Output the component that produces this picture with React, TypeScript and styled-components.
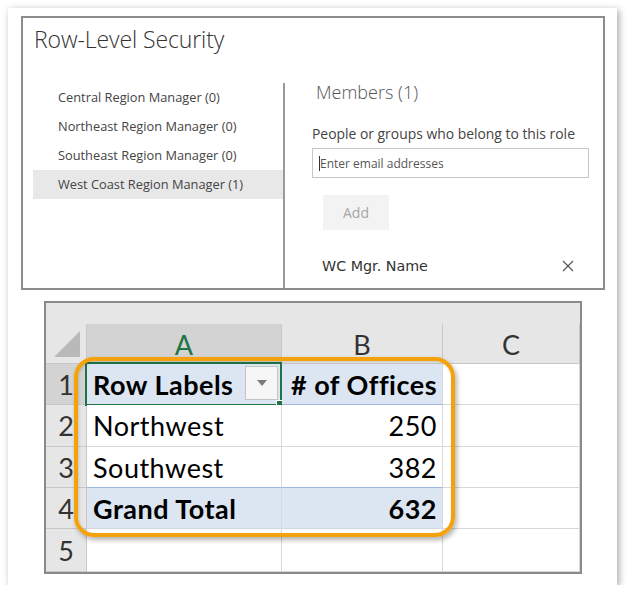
import styled, { createGlobalStyle } from "styled-components"

const Global = createGlobalStyle`
    body {
        margin: 0;
        background: #ffffff;
        font-family: "Open Sans", "Liberation Sans", sans-serif;
    }
`

const Card = styled.div`
    margin: 8px 0 0 8px;
    width: 609px;
    height: 577px;
    box-sizing: border-box;
    background: #ffffff;
    box-shadow: 2px 2px 7px rgba(0, 0, 0, 0.35);
    padding: 8px 0 0 13px;
    display: flex;
    flex-direction: column;
    align-items: flex-start;
    gap: 11px;
`

const RlsPanel = styled.section`
    width: 584px;
    height: 274px;
    box-sizing: border-box;
    border: 2px solid #8c8c8c;
    display: flex;
    flex-direction: column;
`

const Title = styled.h1`
    margin: 0;
    padding: 5px 0 0 11px;
    height: 56px;
    box-sizing: border-box;
    font-weight: 300;
    font-size: 23px;
    color: #333333;
    letter-spacing: -0.1px;
`

const PanelBody = styled.div`
    flex: 1;
    display: flex;
    padding-top: 9px;
`

const RoleList = styled.ul`
    list-style: none;
    margin: 0;
    padding: 0 0 0 10px;
    width: 260px;
    border-right: 2px solid #9a9a9a;
`

const RoleItem = styled.li<{ $active?: boolean }>`
    height: 29px;
    line-height: 29px;
    padding-left: 25px;
    font-size: 12.8px;
    color: #444444;
    background: ${p => (p.$active ? "#e8e8e8" : "transparent")};
`

const MembersPane = styled.div`
    flex: 1;
    padding: 0 14px 0 27px;
    display: flex;
    flex-direction: column;
    align-items: flex-start;
`

const MembersHeading = styled.h2`
    margin: -2px 0 0 4px;
    font-weight: 300;
    font-size: 18px;
    color: #555555;
    line-height: 22px;
`

const FieldLabel = styled.label`
    margin-top: 22px;
    font-size: 13.9px;
    color: #444444;
    line-height: 18px;
`

const EmailBox = styled.div`
    margin-top: 5px;
    width: 277px;
    height: 30px;
    box-sizing: border-box;
    border: 1px solid #c6c6c6;
    display: flex;
    align-items: center;
    padding-left: 6px;
    font-size: 12px;
    color: #555555;
`

const Caret = styled.span`
    width: 1px;
    height: 15px;
    background: #333333;
`

const AddButton = styled.button`
    margin: 17px 0 0 11px;
    width: 66px;
    height: 35px;
    border: none;
    background: #f3f3f3;
    color: #a6a6a6;
    font-family: inherit;
    font-size: 14px;
`

const MemberRow = styled.div`
    margin: 28px 0 0 10px;
    width: 252px;
    display: flex;
    justify-content: space-between;
    align-items: center;
    font-family: "DejaVu Sans", "Open Sans", sans-serif;
    font-size: 14.3px;
    color: #333333;
`

const SheetWrap = styled.div`
    position: relative;
    margin-left: 23px;
`

const Sheet = styled.div`
    width: 538px;
    height: 273px;
    box-sizing: border-box;
    border: 2px solid #8a8a8a;
    background: #ffffff;
    display: grid;
    grid-template-columns: 41px 195px 161px 1fr;
    grid-template-rows: 21px 40px 41px 42px 41px 41px 1fr;
    font-family: "Lato", "Open Sans", sans-serif;
    overflow: hidden;
`

const TopStrip = styled.div`
    grid-column: 1 / -1;
    background: #e6e6e6;
`

const Corner = styled.div`
    background: #e6e6e6;
    border-right: 1px solid #c8c8c8;
    border-bottom: 1px solid #c8c8c8;
    display: flex;
    align-items: flex-end;
    justify-content: flex-end;
    padding: 0 6px 6px 0;
`

const ColHead = styled.div<{ $selected?: boolean }>`
    background: ${p => (p.$selected ? "#d3d3d3" : "#e6e6e6")};
    color: ${p => (p.$selected ? "#217346" : "#333333")};
    border-right: 1px solid #c8c8c8;
    border-bottom: 1px solid #c8c8c8;
    display: flex;
    align-items: center;
    justify-content: center;
    font-size: 27px;
    padding-top: 2px;
`

const RowHead = styled.div<{ $selected?: boolean }>`
    background: ${p => (p.$selected ? "#d3d3d3" : "#e6e6e6")};
    color: #333333;
    border-right: 1px solid #c8c8c8;
    border-bottom: 1px solid #c8c8c8;
    display: flex;
    align-items: center;
    justify-content: center;
    font-size: 27px;
`

type Tone = "plain" | "head" | "total"

const Cell = styled.div<{ $tone?: Tone; $right?: boolean; $bold?: boolean }>`
    position: relative;
    box-sizing: border-box;
    background: ${p => (p.$tone === "head" || p.$tone === "total" ? "#dce5f2" : "#ffffff")};
    border-right: 1px solid #d8d8d8;
    border-bottom: 1px solid ${p => (p.$tone === "head" ? "#9db7dd" : "#d8d8d8")};
    border-top: ${p => (p.$tone === "total" ? "1px solid #9db7dd" : "none")};
    margin-top: ${p => (p.$tone === "total" ? "-1px" : "0")};
    display: flex;
    align-items: center;
    justify-content: ${p => (p.$right ? "flex-end" : "flex-start")};
    padding: 0 5px 0 6px;
    font-size: 27px;
    letter-spacing: 0.5px;
    font-weight: ${p => (p.$bold ? 700 : 400)};
    color: #000000;
    white-space: nowrap;
`

const ActiveFrame = styled.div`
    position: absolute;
    left: -2px;
    top: -2px;
    right: -1px;
    bottom: -2px;
    border: 2px solid #217346;
    pointer-events: none;
`

const FillHandle = styled.div`
    position: absolute;
    right: -5px;
    bottom: -5px;
    width: 7px;
    height: 7px;
    background: #217346;
    border: 1px solid #ffffff;
`

const FilterButton = styled.div`
    position: absolute;
    right: 3px;
    top: 2px;
    width: 33px;
    height: 34px;
    box-sizing: border-box;
    border: 1px solid #c4c4c4;
    background: #f6f6f6;
    display: flex;
    align-items: center;
    justify-content: center;
`

const Highlight = styled.div`
    position: absolute;
    left: 30px;
    top: 56px;
    width: 381px;
    height: 180px;
    box-sizing: border-box;
    border: 4px solid #f5a20a;
    border-radius: 20px;
    box-shadow: 2px 3px 5px rgba(0, 0, 0, 0.3), inset 1px 1px 3px rgba(0, 0, 0, 0.15);
    pointer-events: none;
`

const roles = [
    { name: "Central Region Manager (0)" },
    { name: "Northeast Region Manager (0)" },
    { name: "Southeast Region Manager (0)" },
    { name: "West Coast Region Manager (1)", active: true },
]

export default function App() {
    return (
        <>
            <Global />
            <Card>
                <RlsPanel>
                    <Title>Row-Level Security</Title>
                    <PanelBody>
                        <RoleList>
                            {roles.map(r => (
                                <RoleItem key={r.name} $active={r.active}>{r.name}</RoleItem>
                            ))}
                        </RoleList>
                        <MembersPane>
                            <MembersHeading>Members (1)</MembersHeading>
                            <FieldLabel>People or groups who belong to this role</FieldLabel>
                            <EmailBox><Caret />Enter email addresses</EmailBox>
                            <AddButton>Add</AddButton>
                            <MemberRow>
                                <span>WC Mgr. Name</span>
                                <svg width="12" height="12" viewBox="0 0 12 12">
                                    <path d="M1 1 L11 11 M11 1 L1 11" stroke="#555" strokeWidth="1.2" />
                                </svg>
                            </MemberRow>
                        </MembersPane>
                    </PanelBody>
                </RlsPanel>

                <SheetWrap>
                    <Sheet>
                        <TopStrip />
                        <Corner>
                            <svg width="26" height="26" viewBox="0 0 26 26">
                                <path d="M26 0 L26 26 L0 26 Z" fill="#b9b9b9" />
                            </svg>
                        </Corner>
                        <ColHead $selected>A</ColHead>
                        <ColHead>B</ColHead>
                        <ColHead>C</ColHead>

                        <RowHead $selected>1</RowHead>
                        <Cell $tone="head" $bold>
                            Row Labels
                            <FilterButton>
                                <svg width="10" height="6" viewBox="0 0 10 6">
                                    <path d="M0 0 L10 0 L5 6 Z" fill="#7a7a7a" />
                                </svg>
                            </FilterButton>
                            <ActiveFrame><FillHandle /></ActiveFrame>
                        </Cell>
                        <Cell $tone="head" $bold $right># of Offices</Cell>
                        <Cell />

                        <RowHead>2</RowHead>
                        <Cell>Northwest</Cell>
                        <Cell $right>250</Cell>
                        <Cell />

                        <RowHead>3</RowHead>
                        <Cell>Southwest</Cell>
                        <Cell $right>382</Cell>
                        <Cell />

                        <RowHead>4</RowHead>
                        <Cell $tone="total" $bold>Grand Total</Cell>
                        <Cell $tone="total" $bold $right>632</Cell>
                        <Cell />

                        <RowHead>5</RowHead>
                        <Cell />
                        <Cell />
                        <Cell />
                    </Sheet>
                    <Highlight />
                </SheetWrap>
            </Card>
        </>
    )
}
